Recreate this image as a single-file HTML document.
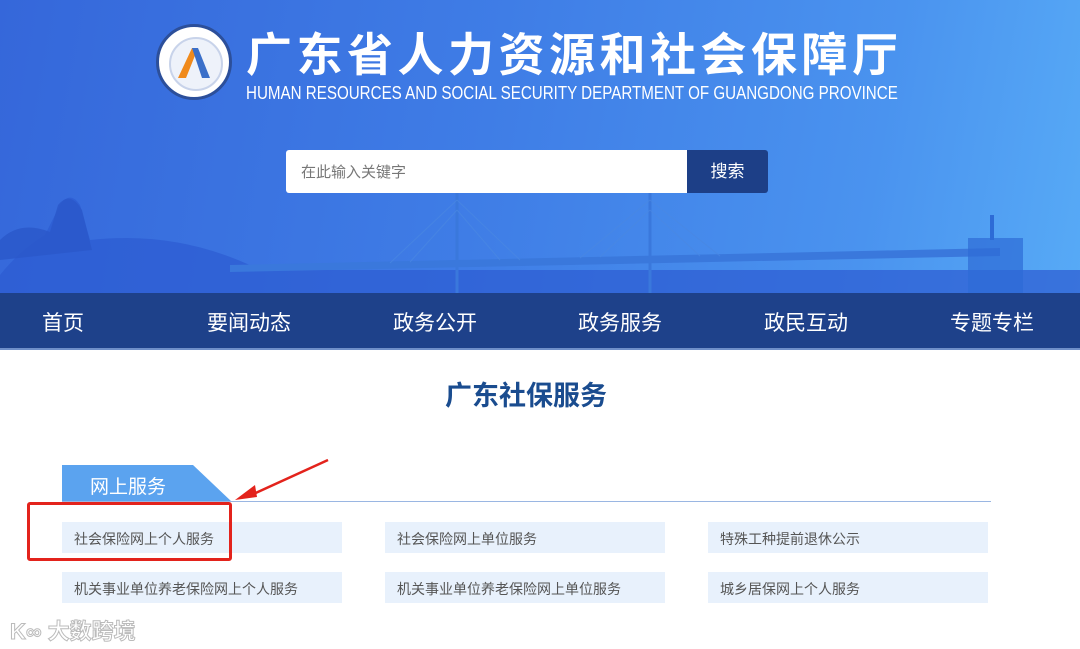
<!DOCTYPE html>
<html><head><meta charset="utf-8"><style>
*{margin:0;padding:0;box-sizing:border-box}
body{width:1080px;height:649px;overflow:hidden;background:#fff;font-family:"Liberation Sans","Noto Sans CJK SC",sans-serif;position:relative}
.hdr{position:absolute;left:0;top:0;width:1080px;height:293px;background:linear-gradient(100deg,#3567da 0%,#3f7de6 45%,#4a93ef 80%,#57aaf6 100%);overflow:hidden}
.logo{position:absolute;left:156px;top:24px;width:76px;height:76px;border-radius:50%;background:#fff;border:3px solid #2c4f9a}
.logo:after{content:"";position:absolute;left:10px;top:10px;width:50px;height:50px;border-radius:50%;background:#eef2fa;border:2px solid #c8d3ea}
.tcn{position:absolute;left:246px;top:22px;font-size:46px;font-weight:bold;color:#fff;letter-spacing:4.5px;font-family:"Noto Sans CJK SC",sans-serif;line-height:60px}
.ten{position:absolute;left:246px;top:83px;font-size:18px;color:#fff;line-height:20px;transform:scaleX(0.842);transform-origin:0 0;white-space:nowrap}
.search{position:absolute;left:286px;top:150px;width:401px;height:43px;background:#fff;border-radius:3px 0 0 3px;font-size:15px;color:#777;padding:11px 15px}
.btn{position:absolute;left:687px;top:150px;width:81px;height:43px;background:#1d3f87;color:#fff;font-size:17px;text-align:center;line-height:43px;border-radius:0 3px 3px 0}
.nav{position:absolute;left:0;top:293px;width:1080px;height:57px;background:#1e418a;border-bottom:2px solid #6f8fc9}
.nav span{position:absolute;top:14px;font-size:21px;color:#fff}
h1{position:absolute;left:-14px;width:1080px;top:374px;text-align:center;font-size:27px;color:#1a4c8f;font-weight:bold}
.tab{position:absolute;left:62px;top:465px;width:170px;height:37px;background:#5ba3ef;clip-path:polygon(0 0,131px 0,170px 37px,0 37px);color:#fff;font-size:19px;padding:7px 0 0 28px}
.line{position:absolute;left:62px;top:501px;width:929px;height:1px;background:#9ab6e2}
.it{position:absolute;height:31px;width:280px;background:#e8f1fc;font-size:14px;color:#555;padding:7px 0 0 12px}
.red{position:absolute;left:27px;top:502px;width:205px;height:59px;border:3px solid #e3231c;border-radius:3px}
.wm{position:absolute;left:10px;top:614px;font-size:22px;color:#fff;-webkit-text-stroke:1px #bbb;font-weight:bold}
</style></head><body>
<div class="hdr">
<svg width="1080" height="293" style="position:absolute;left:0;top:0">
<path d="M0 293 L0 275 Q20 250 45 235 L60 205 Q70 190 80 205 L90 240 Q180 230 260 270 L1080 270 L1080 293Z" fill="#2c5bd2" opacity=".7"/>
<path d="M0 240 Q20 220 50 232 L58 205 Q70 190 82 210 L92 250 L0 260Z" fill="#2b58c9" opacity=".8"/>
<path d="M230 265 L1000 248 L1000 256 L230 272Z" fill="#3a78dc"/>
<g stroke="#3a78dc" stroke-width="3"><line x1="457" y1="193" x2="457" y2="293"/><line x1="650" y1="193" x2="650" y2="293"/></g>
<g stroke="#4a88e2" stroke-width="1" opacity=".7"><path d="M457 200 L390 263 M457 200 L520 260 M457 210 L410 262 M457 210 L500 260 M650 200 L580 258 M650 200 L720 256 M650 210 L600 257 M650 210 L700 256"/></g>
<rect x="968" y="238" width="55" height="55" fill="#2d6bd6" opacity=".7"/><rect x="990" y="215" width="4" height="25" fill="#2d6bd6"/>
</svg>
<div class="logo"></div>
<svg width="40" height="36" style="position:absolute;left:174px;top:44px"><path d="M4 34 L18 4 L24 4 L12 34Z" fill="#f08a1c"/><path d="M18 4 L24 4 L36 34 L28 34Z" fill="#3a6fc9"/></svg>
<div class="tcn">广东省人力资源和社会保障厅</div>
<div class="ten">HUMAN RESOURCES AND SOCIAL SECURITY DEPARTMENT OF GUANGDONG PROVINCE</div>
<div class="search">在此输入关键字</div>
<div class="btn">搜索</div>
</div>
<div class="nav"><span style="left:42px">首页</span><span style="left:207px">要闻动态</span><span style="left:393px">政务公开</span><span style="left:578px">政务服务</span><span style="left:764px">政民互动</span><span style="left:950px">专题专栏</span></div>
<h1>广东社保服务</h1>
<div class="tab">网上服务</div>
<div class="line"></div>
<svg width="120" height="50" style="position:absolute;left:235px;top:455px"><path d="M93 5 L12 42" stroke="#e3231c" stroke-width="2.5"/><path d="M0 45 L20 30 L22 42Z" fill="#e3231c"/></svg>
<div class="it" style="left:62px;top:522px">社会保险网上个人服务</div>
<div class="it" style="left:385px;top:522px">社会保险网上单位服务</div>
<div class="it" style="left:708px;top:522px">特殊工种提前退休公示</div>
<div class="it" style="left:62px;top:572px">机关事业单位养老保险网上个人服务</div>
<div class="it" style="left:385px;top:572px">机关事业单位养老保险网上单位服务</div>
<div class="it" style="left:708px;top:572px">城乡居保网上个人服务</div>
<div class="red"></div>
<div class="wm">K∞ 大数跨境</div>
</body></html>
